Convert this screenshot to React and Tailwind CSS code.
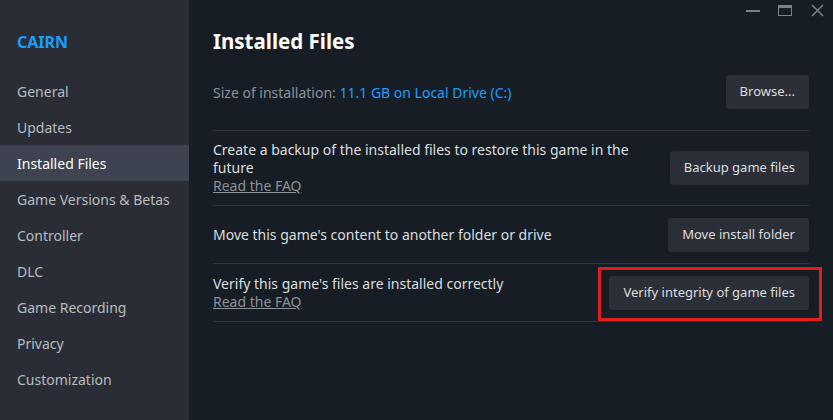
import React from "react";

const items = [
  "General",
  "Updates",
  "Installed Files",
  "Game Versions & Betas",
  "Controller",
  "DLC",
  "Game Recording",
  "Privacy",
  "Customization",
];

function Btn({ children }) {
  return (
    <button className="h-[34px] px-[14px] rounded-[3px] bg-[#2b2f38] text-[#dcdedf] text-[13px] whitespace-nowrap">
      {children}
    </button>
  );
}

export default function App() {
  return (
    <div
      className="w-[833px] h-[420px] flex bg-[#171d25] overflow-hidden"
      style={{ fontFamily: '"Noto Sans", "Open Sans", sans-serif' }}
    >
      <div className="w-[189px] shrink-0 bg-[#2a2d35] flex flex-col">
        <div className="h-[73px] pt-[30px] pl-[17px] text-[16px] font-bold text-[#1a9fff] leading-[24px]">
          CAIRN
        </div>
        {items.map((it) => (
          <div
            key={it}
            className={
              "h-[36px] flex items-center pl-[17px] text-[14px] " +
              (it === "Installed Files"
                ? "bg-[#3d4350] text-white"
                : "text-[#b8bcbf]")
            }
          >
            {it}
          </div>
        ))}
      </div>
      <div className="flex-1 relative pl-[24px] pr-[24px]">
        <div className="absolute top-0 right-0 flex items-center h-[20px]">
          <div className="w-[32px] flex justify-center">
            <div className="w-[14px] h-[2px] bg-[#7c8289] mt-[1px]" />
          </div>
          <div className="w-[32px] flex justify-center">
            <div className="w-[14px] h-[11px] border border-[#7c8289] border-t-[3px]" />
          </div>
          <div className="w-[32px] flex justify-center">
            <svg width="13" height="13" viewBox="0 0 13 13">
              <path d="M1 1 L12 12 M12 1 L1 12" stroke="#7c8289" strokeWidth="1.5" />
            </svg>
          </div>
        </div>
        <div className="pt-[27px] text-[20.5px] font-bold text-white leading-[28px]">
          Installed Files
        </div>
        <div className="mt-[20px] flex items-center justify-between h-[34px]">
          <div className="text-[14px] text-[#8b929a]">
            Size of installation:{" "}
            <span className="text-[#1a9fff]">11.1 GB on Local Drive (C:)</span>
          </div>
          <Btn>Browse...</Btn>
        </div>
        <div className="mt-[21px] border-t border-[#30353d]" />
        <div className="flex items-center justify-between h-[75px] border-b border-[#30353d]">
          <div className="text-[14px] leading-[18px] w-[430px]">
            <div className="text-[#dcdedf]">
              Create a backup of the installed files to restore this game in the future
            </div>
            <div className="text-[#8b929a] underline">Read the FAQ</div>
          </div>
          <Btn>Backup game files</Btn>
        </div>
        <div className="flex items-center justify-between h-[58px] border-b border-[#30353d]">
          <div className="text-[14px] text-[#dcdedf]">
            Move this game's content to another folder or drive
          </div>
          <Btn>Move install folder</Btn>
        </div>
        <div className="flex items-center justify-between h-[58px] border-b border-[#30353d]">
          <div className="text-[14px] leading-[18px]">
            <div className="text-[#dcdedf]">Verify this game's files are installed correctly</div>
            <div className="text-[#8b929a] underline">Read the FAQ</div>
          </div>
          <div className="relative">
            <Btn>Verify integrity of game files</Btn>
            <div className="absolute left-[-11px] right-[-13px] top-[-9px] bottom-[-11px] border-[3px] border-[#e21d1d] pointer-events-none" />
          </div>
        </div>
      </div>
    </div>
  );
}
